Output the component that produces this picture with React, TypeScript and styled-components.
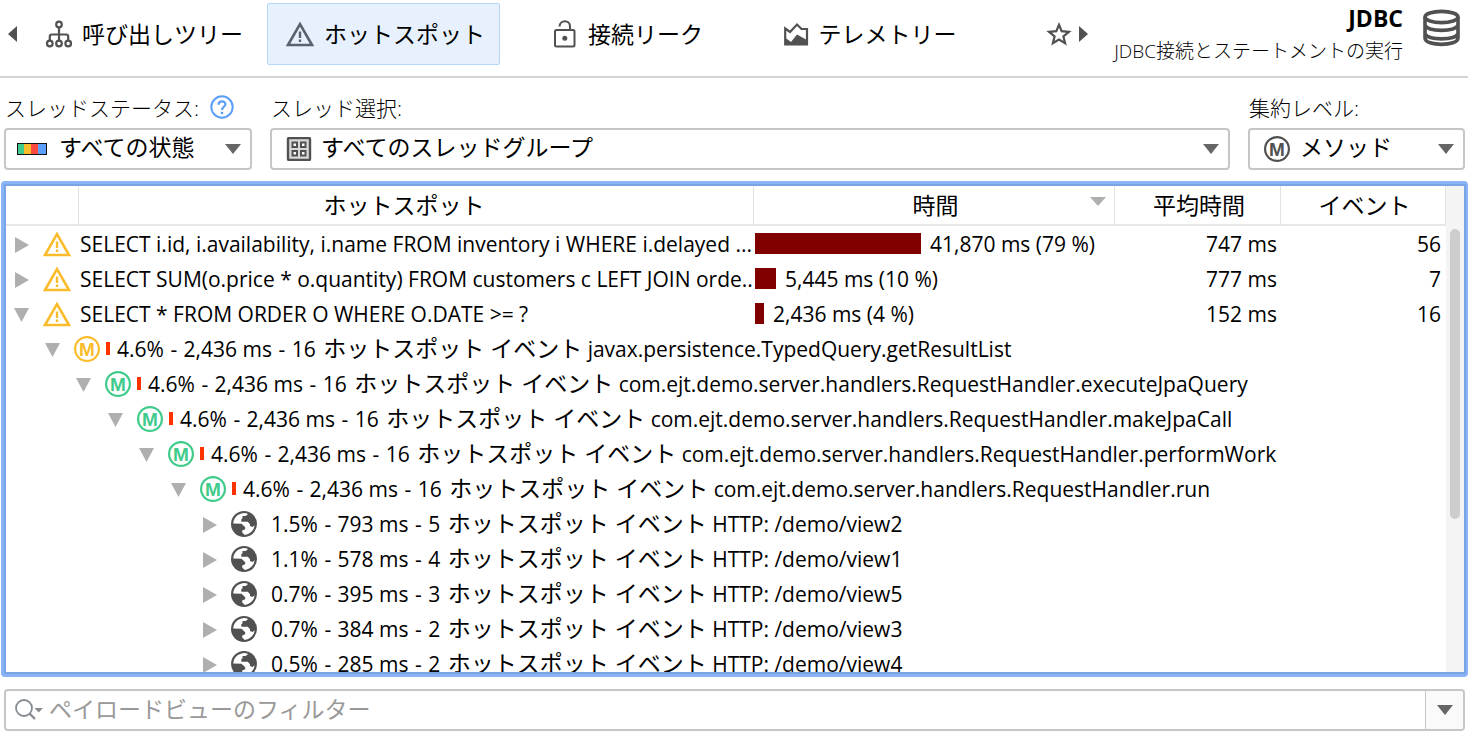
import React from "react";
import styled, { createGlobalStyle } from "styled-components";

const GlobalStyle = createGlobalStyle`
  * { box-sizing: border-box; }
  body {
    margin: 0;
    background: #fff;
    color: #000;
    font-family: "Open Sans", "Noto Sans CJK JP", sans-serif;
    font-size: 21px;
  }
  button, select, input { font: inherit; color: inherit; margin: 0; }
`;

const Page = styled.main`
  display: flex;
  flex-direction: column;
  height: 100vh;
  min-width: 1200px;
  overflow: hidden;
`;

/* Japanese runs are set slightly larger than the Latin text around them */
const Jp = styled.span`
  margin-left: 2px;
  font-size: 23px;
`;

const Dash = styled.span`
  margin: 0 1px;
`;

const Toolbar = styled.header`
  display: flex;
  flex: none;
  height: 78px;
  padding: 3px 8px 0;
  border-bottom: 2px solid #d4d4d4;
`;

const Tabs = styled.nav`
  display: flex;
  align-items: flex-start;
  gap: 9px;
  margin-left: 8px;
`;

const Tab = styled.button<{ $active?: boolean }>`
  display: flex;
  align-items: center;
  justify-content: center;
  gap: 10px;
  width: 233px;
  height: 62px;
  padding: 0 0 0 4px;
  border: 1px solid ${(p) => (p.$active ? "#b5d5fb" : "transparent")};
  border-radius: 2px;
  background: ${(p) => (p.$active ? "#e7f1fe" : "transparent")};
  font-size: 23px;
  line-height: 34px;
  white-space: nowrap;
  svg { flex: none; }
`;

const IconButton = styled.button`
  display: flex;
  align-items: center;
  justify-content: center;
  height: 62px;
  padding: 0;
  border: 0;
  background: none;
`;

const Extras = styled.div`
  display: flex;
  gap: 7px;
  margin-left: 62px;
`;

const Heading = styled.div`
  display: flex;
  gap: 20px;
  margin-left: auto;
  text-align: right;
  white-space: nowrap;
  svg { margin-top: 6px; }
`;

const Title = styled.h1`
  margin: 0;
  font-size: 23px;
  line-height: 30px;
  font-weight: 700;
`;

const Subtitle = styled.p`
  margin: 4px 0 0;
  font-size: 19px;
  line-height: 28px;
  font-weight: 300;
`;

const Filters = styled.section`
  display: flex;
  flex: none;
  gap: 18px;
  padding: 14px 3px 0 4px;
`;

const Field = styled.div<{ $width?: number }>`
  flex: ${(p) => (p.$width ? `0 0 ${p.$width}px` : "1 1 0")};
  min-width: 0;
`;

const FieldLabel = styled.div`
  display: flex;
  align-items: center;
  gap: 11px;
  height: 30px;
  margin-bottom: 6px;
  padding-left: 1px;
  font-size: 21px;
  font-weight: 300;
  white-space: nowrap;
`;

const SelectBox = styled.div`
  display: grid;
  align-items: center;
  > * { grid-area: 1 / 1; }
  > svg { pointer-events: none; }
`;

const Select = styled.select<{ $indent: number }>`
  appearance: none;
  width: 100%;
  height: 42px;
  padding: 0 40px 5px ${(p) => p.$indent}px;
  border: 2px solid #c6c6c6;
  border-radius: 4px;
  background: #fff;
  font-size: 23px;
`;

const LeadIcon = styled.svg`
  z-index: 1;
  margin-left: 13px;
`;

const SelectArrow = styled.svg`
  justify-self: end;
  margin-right: 11px;
`;

const Panel = styled.section`
  flex: 1 1 0;
  min-height: 0;
  margin: 11px 0 0 1px;
  border: 3px solid #8ab4f8;
  border-right-width: 2px;
  border-radius: 4px;
`;

const PanelInner = styled.div`
  display: flex;
  height: 100%;
  border: 2px solid #7ba4e6;
`;

const TableArea = styled.div`
  flex: 1;
  min-width: 0;
  overflow: hidden;
`;

const Track = styled.div`
  flex: none;
  width: 18px;
  padding: 43px 4px 0;
  background: #f4f4f4;
`;

const Thumb = styled.div`
  height: 290px;
  border-radius: 5px;
  background: #cdcdcd;
`;

const Table = styled.table`
  width: 100%;
  table-layout: fixed;
  border-collapse: separate;
  border-spacing: 0;
  white-space: nowrap;
`;

const HeadCell = styled.th<{ $trail?: number }>`
  position: relative;
  height: 40px;
  padding: 0 ${(p) => p.$trail ?? 0}px 0 3px;
  border-right: 1px solid #e2e2e2;
  border-bottom: 2px solid #e8e8e8;
  font-size: 23px;
  line-height: 36px;
  font-weight: 400;
`;

const SortArrow = styled.svg`
  position: absolute;
  top: 11px;
  right: 8px;
`;

const Cell = styled.td<{ $end?: number }>`
  height: 35px;
  padding: 0 ${(p) => p.$end ?? 0}px 0 0;
  line-height: 35px;
  text-align: ${(p) => (p.$end ? "right" : "left")};
`;

const HandleGroup = styled.div`
  display: flex;
  align-items: center;
  height: 35px;
  padding-left: 8px;
  gap: 14px;
`;

/* Single-line value inside a table row */
const Value = styled.div`
  height: 35px;
  padding: 1px 0 0 1px;
  overflow: hidden;
`;

const TimeGroup = styled.div`
  display: flex;
  align-items: center;
  gap: 8px;
  height: 35px;
  padding-left: 1px;
`;

const TimeBar = styled.div<{ $width: number }>`
  width: ${(p) => p.$width}px;
  height: 21px;
  background: #800000;
`;

const TreeLine = styled.div<{ $depth: number }>`
  display: flex;
  align-items: center;
  height: 35px;
  padding-left: ${(p) => 7 + Math.round((p.$depth * 63) / 2)}px;
  gap: 14px;
`;

const NodeLabel = styled.div`
  display: flex;
  align-items: center;
  gap: 7px;
`;

const ShareBar = styled.div`
  width: 4px;
  height: 13px;
  margin-left: -8px;
  background: #ff3300;
`;

const Toggle = styled.button`
  display: flex;
  justify-content: center;
  width: 15px;
  padding: 2px 0 0;
  border: 0;
  background: none;
`;

const FilterBar = styled.form`
  display: flex;
  flex: none;
  align-items: center;
  height: 42px;
  margin: 12px 3px 4px 4px;
  border: 2px solid #c6c6c6;
  border-radius: 4px;
  overflow: hidden;
`;

const SearchButton = styled.button`
  display: flex;
  padding: 0 0 0 9px;
  border: 0;
  background: none;
`;

const FilterInput = styled.input`
  flex: 1;
  min-width: 0;
  height: 100%;
  padding: 0 6px 2px;
  border: 0;
  outline: 0;
  background: none;
  font-size: 23px;
  &::placeholder { color: #999; opacity: 1; }
`;

const HistoryButton = styled.button`
  display: flex;
  align-items: center;
  justify-content: center;
  width: 38px;
  height: 100%;
  padding: 0;
  border: 0;
  border-left: 1px solid #c6c6c6;
  background: #fafafa;
`;

const GREY = "#515151";

const TreeIcon = () => (
  <svg width="28" height="28" viewBox="0 0 28 28" fill="none" stroke={GREY} strokeWidth="2.200">
    <circle cx="15" cy="4.500" r="2.800" />
    <circle cx="5.800" cy="23.500" r="2.800" />
    <circle cx="15" cy="23.500" r="2.800" />
    <circle cx="24.200" cy="23.500" r="2.800" />
    <path d="M15 7.500V20.500M5.800 20.500v-4q0-2 2-2h14.400q2 0 2 2v4" />
  </svg>
);

const WarningIcon = ({ color }: { color: string }) => (
  <svg width="28" height="26" viewBox="0 0 28 26" fill="none" stroke={color}>
    <path d="M14 3.200L26 24H2Z" strokeWidth="2.600" />
    <path d="M14 10.500v6.500M14 18.500v2.500" strokeWidth="2.400" />
  </svg>
);

const LockIcon = () => (
  <svg width="26" height="30" viewBox="0 0 26 30" fill="none" stroke={GREY} strokeWidth="2">
    <rect x="3" y="11" width="19.500" height="16.500" rx="1.500" />
    <path d="M7.500 7.500C8 0.500 18 0.500 18 7.500V11" />
    <circle cx="12.800" cy="19.200" r="2.500" fill={GREY} stroke="none" />
  </svg>
);

const TelemetryIcon = () => (
  <svg width="26" height="28" viewBox="0 0 26 28">
    <path
      d="M2.200 8.500L7 12L14 4.500L18.500 9H24V24.500H2.200Z"
      fill="none"
      stroke={GREY}
      strokeWidth="2.200"
    />
    <path d="M2 17.500L8 22L14 14.500L24 20V25H2Z" fill={GREY} />
  </svg>
);

const StarIcon = () => (
  <svg width="26" height="26" viewBox="0 0 26 26" fill="none" stroke={GREY} strokeWidth="2.200">
    <path d="M13 3.800L15.700 10.200L22.900 10.800L17.400 15.300L19.100 22.300L13 18.600L6.900 22.300L8.600 15.300L3.100 10.800L10.300 10.200Z" />
  </svg>
);

const DatabaseIcon = () => (
  <svg width="37" height="38" viewBox="0 0 37 38" fill="none" stroke={GREY} strokeWidth="3.600">
    <ellipse cx="18.500" cy="8" rx="16.500" ry="5.600" />
    <path d="M2 8v21c0 8.500 33 8.500 33 0V8M2 16.500c4 6.500 29 6.500 33 0M2 25c4 6.500 29 6.500 33 0" />
  </svg>
);

const HelpIcon = () => (
  <svg width="24" height="24" viewBox="0 0 24 24" fill="none" stroke="#5c9ff8" strokeWidth="2">
    <circle cx="12" cy="12" r="10.700" />
    <path d="M8.600 9.800C8.600 5.200 15.600 5.400 15.400 9.400C15.200 11.700 12 12 12 15" strokeWidth="2.300" />
    <path d="M12 16.800v2.400" strokeWidth="2.400" />
  </svg>
);

const MethodIcon = ({ color }: { color: string }) => (
  <svg width="26" height="26" viewBox="0 0 26 26">
    <circle cx="13" cy="13" r="11.900" fill="none" stroke={color} strokeWidth="2.200" />
    <text
      x="13"
      y="20"
      textAnchor="middle"
      fontFamily="Liberation Sans Narrow, Liberation Sans, sans-serif"
      fontSize="19"
      fontWeight="700"
      fill={color}
    >
      M
    </text>
  </svg>
);

const GlobeIcon = () => (
  <svg width="26" height="26" viewBox="0 0 26 26">
    <circle cx="13" cy="13" r="13" fill={GREY} />
    <path
      d="M2.200 12.600A10.900 10.900 0 0 1 16.500 2.600V3.800L14.500 5H11.500V7.200L10.300 8.200V10.800H16.800L19 13.200V15L21.500 16L23.700 14.200A10.900 10.900 0 0 1 13.800 23.900L11.200 21.500V19.500L14.200 18.200V16.300L10.500 12.800Z"
      fill="#fff"
    />
  </svg>
);

const Down = ({ w = 16, h = 10, color = "#666" }: { w?: number; h?: number; color?: string }) => (
  <svg width={w} height={h} viewBox="0 0 16 10" preserveAspectRatio="none">
    <path d="M0 0H16L8 10Z" fill={color} />
  </svg>
);

const Side = ({ left, w = 14, h = 16, color = "#afafaf" }: { left?: boolean; w?: number; h?: number; color?: string }) => (
  <svg width={w} height={h} viewBox="0 0 14 16" preserveAspectRatio="none">
    <path d={left ? "M14 0V16L0 8Z" : "M0 0V16L14 8Z"} fill={color} />
  </svg>
);

const Expander = ({ open }: { open: boolean }) => (
  <Toggle type="button" aria-expanded={open} aria-label={open ? "折りたたむ" : "展開"}>
    {open ? <Down w={15} h={14} color="#afafaf" /> : <Side />}
  </Toggle>
);

const Stats = ({ share, time, count }: { share: string; time: string; count: number }) => (
  <>
    {share} <Dash>-</Dash> {time} <Dash>-</Dash> {count} <Jp>ホットスポット イベント</Jp>
  </>
);

const STATEMENTS = [
  {
    sql: "SELECT i.id, i.availability, i.name FROM inventory i WHERE i.delayed ...",
    bar: 166, time: "41,870 ms (79 %)", avg: "747 ms", events: 56, open: false,
  },
  {
    sql: "SELECT SUM(o.price * o.quantity) FROM customers c LEFT JOIN orde..",
    bar: 21, time: "5,445 ms (10 %)", avg: "777 ms", events: 7, open: false,
  },
  {
    sql: "SELECT * FROM ORDER O WHERE O.DATE >= ?",
    bar: 9, time: "2,436 ms (4 %)", avg: "152 ms", events: 16, open: true,
  },
];

const METHODS = [
  { color: "#fbbc2c", name: "javax.persistence.TypedQuery.getResultList" },
  { color: "#3ecb8b", name: "com.ejt.demo.server.handlers.RequestHandler.executeJpaQuery" },
  { color: "#3ecb8b", name: "com.ejt.demo.server.handlers.RequestHandler.makeJpaCall" },
  { color: "#3ecb8b", name: "com.ejt.demo.server.handlers.RequestHandler.performWork" },
  { color: "#3ecb8b", name: "com.ejt.demo.server.handlers.RequestHandler.run" },
];

const REQUESTS = [
  { share: "1.5%", time: "793 ms", count: 5, url: "/demo/view2" },
  { share: "1.1%", time: "578 ms", count: 4, url: "/demo/view1" },
  { share: "0.7%", time: "395 ms", count: 3, url: "/demo/view5" },
  { share: "0.7%", time: "384 ms", count: 2, url: "/demo/view3" },
  { share: "0.5%", time: "285 ms", count: 2, url: "/demo/view4" },
];

export default function App() {
  return (
    <Page>
      <GlobalStyle />
      <Toolbar>
        <IconButton type="button" aria-label="前へ">
          <Side left w={9} h={16} color={GREY} />
        </IconButton>
        <Tabs>
          <Tab type="button"><TreeIcon />呼び出しツリー</Tab>
          <Tab type="button" $active><WarningIcon color="#59626d" />ホットスポット</Tab>
          <Tab type="button"><LockIcon />接続リーク</Tab>
          <Tab type="button"><TelemetryIcon />テレメトリー</Tab>
        </Tabs>
        <Extras>
          <IconButton type="button" aria-label="お気に入り"><StarIcon /></IconButton>
          <IconButton type="button" aria-label="次へ"><Side w={9} h={16} color={GREY} /></IconButton>
        </Extras>
        <Heading>
          <div>
            <Title>JDBC</Title>
            <Subtitle>JDBC接続とステートメントの実行</Subtitle>
          </div>
          <DatabaseIcon />
        </Heading>
      </Toolbar>

      <Filters>
        <Field $width={248}>
          <FieldLabel>
            <label htmlFor="status">スレッドステータス:</label>
            <HelpIcon />
          </FieldLabel>
          <SelectBox>
            <Select id="status" $indent={53}><option>すべての状態</option></Select>
            <LeadIcon width="30" height="12" viewBox="0 0 30 12">
              <rect width="30" height="12" fill="#111" />
              <rect x="1" y="1" width="6" height="10" fill="#3ecb8b" />
              <rect x="7" y="1" width="7" height="10" fill="#fbbc2c" />
              <rect x="14" y="1" width="7" height="10" fill="#f8493c" />
              <rect x="21" y="1" width="8" height="10" fill="#5c9ff8" />
            </LeadIcon>
            <SelectArrow width="16" height="10"><path d="M0 0H16L8 10Z" fill="#666" /></SelectArrow>
          </SelectBox>
        </Field>
        <Field>
          <FieldLabel><label htmlFor="threads">スレッド選択:</label></FieldLabel>
          <SelectBox>
            <Select id="threads" $indent={49}><option>すべてのスレッドグループ</option></Select>
            <LeadIcon width="32" height="24" viewBox="-4 0 32 24" fill="none" stroke={GREY} strokeWidth="2">
              <rect x="1" y="1" width="22" height="22" rx="1" fill="#d8d8d8" strokeWidth="2.400" />
              <rect x="5.500" y="5.500" width="4.500" height="4.500" fill="#fff" />
              <rect x="14" y="5.500" width="4.500" height="4.500" fill="#fff" />
              <rect x="5.500" y="14" width="4.500" height="4.500" fill="#fff" />
              <rect x="14" y="14" width="4.500" height="4.500" fill="#fff" />
            </LeadIcon>
            <SelectArrow width="16" height="10"><path d="M0 0H16L8 10Z" fill="#666" /></SelectArrow>
          </SelectBox>
        </Field>
        <Field $width={217}>
          <FieldLabel><label htmlFor="level">集約レベル:</label></FieldLabel>
          <SelectBox>
            <Select id="level" $indent={50}><option>メソッド</option></Select>
            <LeadIcon width="30" height="26" viewBox="-3 0 30 26">
              <MethodIcon color={GREY} />
            </LeadIcon>
            <SelectArrow width="16" height="10"><path d="M0 0H16L8 10Z" fill="#666" /></SelectArrow>
          </SelectBox>
        </Field>
      </Filters>

      <Panel>
        <PanelInner>
          <TableArea>
            <Table>
              <colgroup>
                <col width="73" />
                <col />
                <col width="361" />
                <col width="166" />
                <col width="165" />
              </colgroup>
              <thead>
                <tr>
                  <HeadCell />
                  <HeadCell $trail={27}>ホットスポット</HeadCell>
                  <HeadCell>
                    時間
                    <SortArrow width="16" height="9"><path d="M0 0H16L8 9Z" fill="#afafaf" /></SortArrow>
                  </HeadCell>
                  <HeadCell>平均時間</HeadCell>
                  <HeadCell>イベント</HeadCell>
                </tr>
              </thead>
              <tbody>
                {STATEMENTS.map((s) => (
                  <tr key={s.sql}>
                    <Cell>
                      <HandleGroup>
                        <Expander open={s.open} />
                        <WarningIcon color="#fbbc2c" />
                      </HandleGroup>
                    </Cell>
                    <Cell><Value>{s.sql}</Value></Cell>
                    <Cell>
                      <TimeGroup><TimeBar $width={s.bar} /><Value>{s.time}</Value></TimeGroup>
                    </Cell>
                    <Cell $end={4}><Value>{s.avg}</Value></Cell>
                    <Cell $end={5}><Value>{s.events}</Value></Cell>
                  </tr>
                ))}
                {METHODS.map((m, i) => (
                  <tr key={m.name}>
                    <Cell colSpan={5}>
                      <TreeLine $depth={i + 1}>
                        <Expander open />
                        <MethodIcon color={m.color} />
                        <NodeLabel>
                          <ShareBar />
                          <span><Stats share="4.6%" time="2,436 ms" count={16} /> {m.name}</span>
                        </NodeLabel>
                      </TreeLine>
                    </Cell>
                  </tr>
                ))}
                {REQUESTS.map((r) => (
                  <tr key={r.url}>
                    <Cell colSpan={5}>
                      <TreeLine $depth={6}>
                        <Expander open={false} />
                        <GlobeIcon />
                        <span><Stats share={r.share} time={r.time} count={r.count} /> HTTP: {r.url}</span>
                      </TreeLine>
                    </Cell>
                  </tr>
                ))}
              </tbody>
            </Table>
          </TableArea>
          <Track><Thumb /></Track>
        </PanelInner>
      </Panel>

      <FilterBar>
        <SearchButton type="button" aria-label="検索オプション">
          <svg width="28" height="24" viewBox="0 0 28 24" fill="none" stroke="#858c92">
            <circle cx="9" cy="10" r="8" strokeWidth="1.800" />
            <path d="M14.500 15.500L20 21" strokeWidth="2.400" />
            <path d="M19.500 10H28L23.700 14.500Z" fill="#858c92" stroke="none" />
          </svg>
        </SearchButton>
        <FilterInput aria-label="フィルター" placeholder="ペイロードビューのフィルター" />
        <HistoryButton type="button" aria-label="履歴"><Down /></HistoryButton>
      </FilterBar>
    </Page>
  );
}
